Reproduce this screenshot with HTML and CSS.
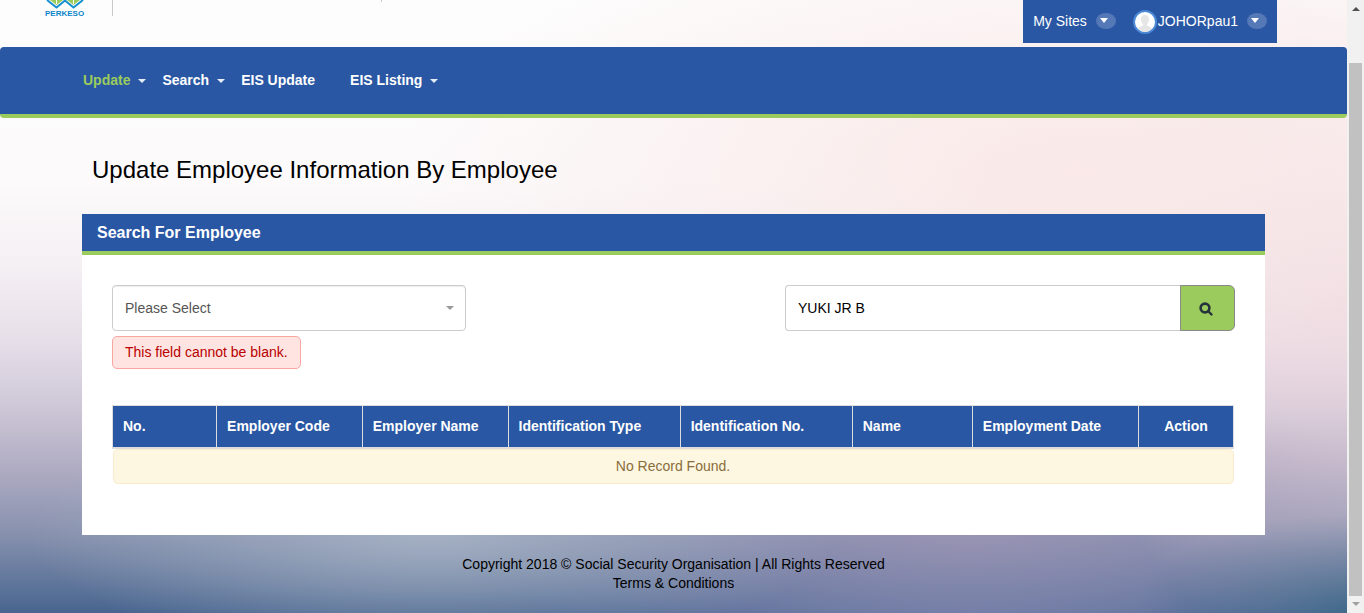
FILE: index.html
```html
<!DOCTYPE html>
<html lang="en">
<head>
<meta charset="utf-8">
<title>Update Employee Information By Employee</title>
<link rel="stylesheet" href="styles.css">
</head>
<body>
<div class="page">
  <header class="header">
    <div class="brand">
      <svg class="brand-mark" width="40" height="9" viewBox="0 0 40 9" aria-hidden="true">
        <path d="M5 0h13l-6.500 5zM22 0h13l-6.500 5z" fill="#9bcb5c"/>
        <path d="M11.500 0v4M28.500 0v4" stroke="#fff" stroke-width="1"/>
        <path d="M2 0l9.500 7.500L20 0.500l8.500 7L38 0" fill="none" stroke="#1590d0" stroke-width="2"/>
      </svg>
      <span class="brand-name">PERKESO</span>
    </div>
    <span class="divider"></span>
    <span class="divider divider-short"></span>
    <div class="userbar">
      <button class="user-item" type="button">My Sites <span class="pill"><span class="caret"></span></span></button>
      <button class="user-item user-account" type="button">
        <svg width="24" height="24" viewBox="0 0 24 24" aria-hidden="true">
          <circle cx="12" cy="12" r="11" fill="#fff" stroke="#4b88d6" stroke-width="2"/>
          <path d="M12 5c-3 0-4 2-4 4.500s1 3.500 2 4.500v1.500c-1 1-4 1-5 3q3 3.500 7 3.500t7-3.500c-1-2-4-2-5-3V14c1-1 2-2 2-4.500S15 5 12 5z" fill="#e6e6e6"/>
        </svg>
        <span>JOHORpau1</span> <span class="pill"><span class="caret"></span></span>
      </button>
    </div>
  </header>

  <nav class="nav">
    <a class="nav-link active" href="#">Update <span class="caret"></span></a>
    <a class="nav-link" href="#">Search <span class="caret"></span></a>
    <a class="nav-link nav-plain" href="#">EIS Update</a>
    <a class="nav-link" href="#">EIS Listing <span class="caret"></span></a>
  </nav>

  <main class="main">
    <h1 class="title">Update Employee Information By Employee</h1>
    <section class="panel">
      <h2 class="panel-title">Search For Employee</h2>
      <div class="panel-body">
        <form class="search">
          <div class="field">
            <div class="select-wrap">
              <select class="control select" aria-label="Search by"><option>Please Select</option></select>
              <span class="caret select-caret"></span>
            </div>
            <div class="error">This field cannot be blank.</div>
          </div>
          <div class="group">
            <input class="control keyword" type="text" value="YUKI JR B" aria-label="Keyword">
            <button class="search-button" type="button" aria-label="Search">
              <svg width="14" height="14" viewBox="0 0 14 14" aria-hidden="true">
                <circle cx="6" cy="6" r="4.400" fill="none" stroke="#26333b" stroke-width="2.600"/>
                <path d="M9 9l3.500 3.500" stroke="#26333b" stroke-width="2.400" stroke-linecap="round"/>
              </svg>
            </button>
          </div>
        </form>
        <table class="results">
          <thead>
            <tr>
              <th class="c-no">No.</th>
              <th class="c-employer">Employer Code</th>
              <th class="c-employer">Employer Name</th>
              <th class="c-ident">Identification Type</th>
              <th class="c-ident">Identification No.</th>
              <th class="c-name">Name</th>
              <th class="c-date">Employment Date</th>
              <th class="c-action">Action</th>
            </tr>
          </thead>
          <tbody>
            <tr><td colspan="8"><div class="notice">No Record Found.</div></td></tr>
          </tbody>
        </table>
      </div>
    </section>
  </main>

  <footer class="footer">
    <span>Copyright 2018 © Social Security Organisation | All Rights Reserved</span>
    <a href="#">Terms &amp; Conditions</a>
  </footer>
</div>
<div class="scrollbar" aria-hidden="true">
  <span class="arrow arrow-up"></span>
  <span class="thumb"></span>
  <span class="arrow arrow-down"></span>
</div>
</body>
</html>
```

FILE: styles.css
```css
* { box-sizing: border-box; }

body {
  margin: 0;
  display: flex;
  min-height: 100vh;
  font-family: "Liberation Sans", Arial, sans-serif;
  font-size: 14px;
  line-height: 20px;
  color: #000;
}

button, input, select { font: inherit; }

.page {
  flex: 1;
  min-width: 0;
  display: flex;
  flex-direction: column;
  background:
    radial-gradient(ellipse 50% 46% at 80% 28%, rgba(248, 226, 224, .75), rgba(248, 226, 224, 0)),
    radial-gradient(ellipse 20% 60% at 100% 50%, rgba(240, 214, 222, .55), rgba(240, 214, 222, 0)),
    radial-gradient(ellipse 30% 20% at 32% 87%, rgba(172, 184, 200, .8), rgba(172, 184, 200, 0)),
    radial-gradient(ellipse 36% 24% at 72% 87%, rgba(160, 150, 182, .75), rgba(160, 150, 182, 0)),
    radial-gradient(ellipse 16% 16% at 100% 100%, #2a5c80, rgba(42, 92, 128, 0)),
    radial-gradient(ellipse 36% 16% at 72% 100%, rgba(104, 122, 168, .7), rgba(104, 122, 168, 0)),
    linear-gradient(#fdfdfd 0%, #fcfafb 30%, #f4eff3 44%, #e6dee8 56%, #cfc8d8 66%, #b1adc3 76%, #8791ae 87%, #48658f 100%);
}

.header {
  display: flex;
  align-items: flex-start;
  height: 47px;
  padding: 0 70px 0 45px;
}

.brand { display: flex; flex-direction: column; width: 42px; }
.brand-mark { display: block; }
.brand-name { color: #0d86c9; font-size: 8px; font-weight: bold; line-height: 9px; }
.divider { width: 1px; height: 16px; margin-left: 25px; background: #c8c8c8; }
.divider-short { height: 2px; margin-left: 268px; }

.userbar {
  display: flex;
  align-items: center;
  gap: 17px;
  height: 43px;
  margin-left: auto;
  padding: 0 10px 2px;
  background: #2957a4;
}

.user-item {
  display: flex;
  align-items: center;
  gap: 9px;
  padding: 0;
  border: 0;
  background: none;
  color: #fff;
}
.user-account svg { margin: 2px -8px 0 0; }

.pill {
  display: flex;
  align-items: center;
  justify-content: center;
  width: 20px;
  height: 16px;
  border-radius: 50%;
  background: #5578b6;
}

.caret {
  display: inline-block;
  border: 4px solid transparent;
  border-top-color: currentColor;
  border-bottom: 0;
}
.pill .caret { margin-right: 4px; }
.pill .caret { border-width: 5px 4px 0; }

.nav {
  display: flex;
  align-items: center;
  gap: 16px;
  height: 71px;
  padding: 0 83px 2px;
  border-bottom: 4px solid #9bcb5c;
  border-radius: 4px;
  background: #2957a4;
}
.nav-link {
  display: flex;
  align-items: center;
  gap: 8px;
  color: #fff;
  font-weight: bold;
  text-decoration: none;
}
.nav-link.active { color: #9bcb5c; }
.nav-link .caret { margin-top: 2px; border-top-color: #e8eef8; }
.nav-plain { margin-right: 19px; }

.main { padding: 0 82px; }
.title {
  margin: 37px 10px 29px;
  font-size: 24px;
  font-weight: normal;
  line-height: 30px;
}
.panel { background: #fff; }
.panel-title {
  margin: 0;
  padding: 9px 15px 8px;
  border-bottom: 4px solid #9bcb5c;
  background: #2957a4;
  color: #fff;
  font-size: 16px;
  line-height: 20px;
}
.panel-body { padding: 30px 30px 51px; }

.search { display: flex; justify-content: space-between; align-items: flex-start; }
.field { width: 354px; }
.select-wrap { position: relative; }
.control {
  display: block;
  width: 100%;
  height: 46px;
  padding: 0 12px;
  border: 1px solid #ccc;
  border-radius: 4px;
  background: #fff;
  color: #000;
}
.select { appearance: none; color: #555; box-shadow: inset 0 1px 1px rgba(0, 0, 0, .075); }
.select-caret {
  position: absolute;
  top: 21px;
  right: 12px;
  color: #999;
  pointer-events: none;
}
.error {
  width: fit-content;
  margin-top: 5px;
  padding: 5px 12px 6px;
  border: 1px solid #f9a6a1;
  border-radius: 5px;
  background: #ffe4e1;
  color: #b90000;
}
.group { display: flex; width: 450px; }
.keyword { flex: 1; min-width: 0; border-right: 0; border-radius: 4px 0 0 4px; }
.search-button {
  display: flex;
  align-items: center;
  justify-content: center;
  width: 55px;
  height: 46px;
  padding: 2px 4px 0 0;
  border: 1px solid #888;
  border-radius: 0 6px 6px 0;
  background: #9bcb5c;
}

.results {
  width: calc(100% - 1px);
  margin-top: 36px;
  border-collapse: collapse;
  table-layout: fixed;
}
.results th {
  padding: 10px;
  border: 1px solid #ddd;
  border-bottom-width: 2px;
  background: #2957a4;
  color: #fff;
  line-height: 21px;
  text-align: left;
}
.results td { padding: 0; }
.c-no { width: 104px; }
.c-employer { width: 13%; }
.c-ident { width: 172px; }
.c-name { width: 120px; }
.c-date { width: 166px; }
.results .c-action { width: 95px; text-align: center; }

.notice {
  padding: 7px;
  border: 1px solid #faebcc;
  border-radius: 5px;
  background: #fdf7e2;
  color: #8a6d3b;
  line-height: 19px;
  text-align: center;
}

.footer {
  display: flex;
  flex-direction: column;
  align-items: center;
  padding-top: 20px;
  line-height: 19px;
}
.footer a { color: #000; text-decoration: none; }

.scrollbar {
  display: flex;
  flex-direction: column;
  align-items: center;
  width: 17px;
  background: #f1f1f1;
}
.arrow { border: 4px solid transparent; }
.arrow-up { margin: 7px 0 52px; border-top: 0; border-bottom-color: #505050; }
.arrow-down { margin: 6px 0 7px; border-bottom: 0; border-top-color: #a0a0a0; }
.thumb { flex: 1; width: 13px; background: #c1c1c1; }
```
